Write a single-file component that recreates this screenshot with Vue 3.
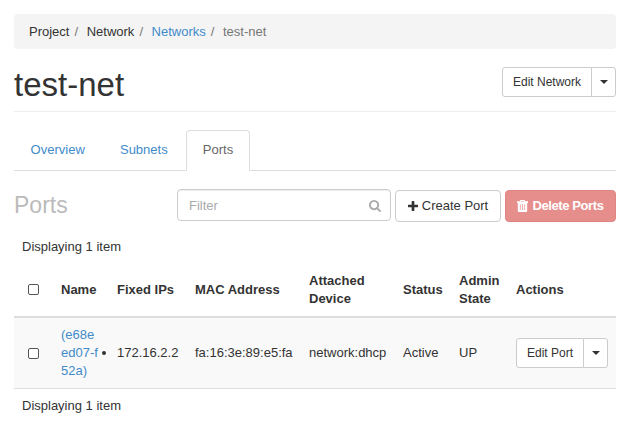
<script setup>
const crumbs = ['Project', 'Network', 'Networks', 'test-net']
const tabs = ['Overview', 'Subnets', 'Ports']
const columns = ['Name', 'Fixed IPs', 'MAC Address', 'Attached Device', 'Status', 'Admin State', 'Actions']
</script>

<template>
  <main class="page">
    <ol class="breadcrumb">
      <li v-for="(crumb, i) in crumbs" :key="crumb">
        <a v-if="i === 2" href="#">{{ crumb }}</a>
        <span v-else :class="{ current: i === 3 }">{{ crumb }}</span>
      </li>
    </ol>

    <header class="page-header">
      <h1>test-net</h1>
      <div class="btn-group">
        <button class="btn">Edit Network</button>
        <button class="btn toggle" aria-label="More actions"><span class="caret"></span></button>
      </div>
    </header>

    <nav class="tabs">
      <a v-for="tab in tabs" :key="tab" href="#" :class="{ active: tab === 'Ports' }">{{ tab }}</a>
    </nav>

    <div class="toolbar">
      <h3>Ports</h3>
      <div class="search">
        <input type="text" placeholder="Filter" />
        <svg class="search-icon" viewBox="0 0 1664 1664" aria-hidden="true">
          <path d="M1152 704q0-185-131.500-316.500t-316.500-131.500-316.500 131.500-131.500 316.500 131.500 316.500 316.500 131.500 316.500-131.500 131.500-316.500zm512 832q0 52-38 90t-90 38q-54 0-90-38l-343-342q-179 124-399 124-143 0-273.500-55.500t-225-150-150-225-55.500-273.500 55.500-273.500 150-225 225-150 273.500-55.500 273.500 55.500 225 150 150 225 55.500 273.500q0 220-124 399l343 343q37 37 37 90z" />
        </svg>
      </div>
      <button class="btn create">
        <svg class="plus-icon" viewBox="0 0 1408 1408" aria-hidden="true">
          <path d="M1408 608v192q0 40-28 68t-68 28h-416v416q0 40-28 68t-68 28h-192q-40 0-68-28t-28-68v-416h-416q-40 0-68-28t-28-68v-192q0-40 28-68t68-28h416v-416q0-40 28-68t68-28h192q40 0 68 28t28 68v416h416q40 0 68 28t28 68z" />
        </svg>
        Create Port
      </button>
      <button class="btn danger" disabled>
        <svg class="trash-icon" viewBox="0 0 11 12" aria-hidden="true">
          <path fill-rule="evenodd" d="M3.500 0h4l.8 1.300H11V3h-.8v7.700q0 1.300-1.200 1.300H2Q.8 12 .8 10.700V3H0V1.300h2.700zM4.200 1l-.2.500h3l-.2-.5zM2.900 4.200v5.800h.7V4.200zM5.150 4.200v5.800h.7V4.200zM7.400 4.200v5.800h.7V4.200z" />
        </svg>
        <span>Delete Ports</span>
      </button>
    </div>

    <div class="count">Displaying 1 item</div>
    <table>
      <colgroup>
        <col class="c-check" /><col class="c-name" /><col class="c-ip" /><col class="c-mac" />
        <col class="c-device" /><col class="c-status" /><col class="c-admin" /><col />
      </colgroup>
      <thead>
        <tr>
          <th class="check"><input type="checkbox" aria-label="Select all" /></th>
          <th v-for="column in columns" :key="column">{{ column }}</th>
        </tr>
      </thead>
      <tbody>
        <tr>
          <td class="check"><input type="checkbox" aria-label="Select port" /></td>
          <td><a href="#">(e68e<br />ed07-f<br />52a)</a></td>
          <td><ul><li>172.16.2.2</li></ul></td>
          <td>fa:16:3e:89:e5:fa</td>
          <td>network:dhcp</td>
          <td>Active</td>
          <td>UP</td>
          <td>
            <div class="btn-group">
              <button class="btn">Edit Port</button>
              <button class="btn toggle" aria-label="More actions"><span class="caret"></span></button>
            </div>
          </td>
        </tr>
      </tbody>
    </table>
    <div class="count footer">Displaying 1 item</div>
  </main>
</template>

<style>
body {
  background: #fff;
}
</style>

<style scoped>
* {
  box-sizing: border-box;
}
.page {
  padding: 14px 14px 0;
  font: 13px/18px "Liberation Sans", Arial, sans-serif;
  color: #333;
}
a {
  color: #428bca;
  text-decoration: none;
}
.breadcrumb {
  display: flex;
  height: 35px;
  margin: 0;
  padding: 9px 15px 8px;
  border-radius: 4px;
  background: #f4f4f4;
  list-style: none;
}
.breadcrumb li + li::before {
  content: "/";
  padding: 0 8.6px 0 5px;
  color: #777;
}
.current {
  color: #777;
}
.page-header {
  display: flex;
  justify-content: space-between;
  height: 63px;
  padding-top: 18px;
  border-bottom: 1px solid #eee;
}
h1 {
  margin: 0;
  font-size: 33px;
  font-weight: 400;
  line-height: 36px;
}
.btn-group {
  display: flex;
  width: max-content;
  height: 30px;
}
.btn {
  display: flex;
  align-items: center;
  justify-content: center;
  margin: 0;
  padding: 0 10px;
  border: 1px solid #ccc;
  border-radius: 4px;
  background: #fff;
  color: #333;
  font: inherit;
  white-space: nowrap;
}
.btn-group .btn {
  font-size: 12px;
}
.btn-group .btn:first-child {
  border-radius: 3px 0 0 3px;
}
.btn-group .toggle {
  width: 25px;
  margin-left: -1px;
  padding: 0;
  border-radius: 0 3px 3px 0;
}
.caret {
  border-top: 4px solid #333;
  border-right: 4px solid transparent;
  border-left: 4px solid transparent;
}
.tabs {
  display: flex;
  gap: 2px;
  height: 41px;
  margin-top: 18px;
  border-bottom: 1px solid #ddd;
}
.tabs a {
  height: 41px;
  padding: 10px 15.6px;
  border: 1px solid transparent;
  line-height: 18px;
}
.tabs .active {
  border-color: #ddd #ddd #fff;
  border-radius: 4px 4px 0 0;
  background: #fff;
  color: #666;
}
.toolbar {
  display: grid;
  grid-template-columns: 159px 214px 106px 111px;
  column-gap: 4px;
  height: 33px;
  margin-top: 18px;
}
h3 {
  margin: 3px 0 0;
  color: #bbb;
  font-size: 23px;
  font-weight: 400;
  line-height: 26px;
}
.search {
  display: flex;
  align-items: center;
  justify-content: space-between;
  height: 32px;
  padding: 1px 9px 0 11px;
  border: 1px solid #ccc;
  border-radius: 4px;
  box-shadow: inset 0 1px 1px rgba(0, 0, 0, 0.075);
}
.search input {
  width: 150px;
  padding: 0;
  border: 0;
  outline: 0;
  background: none;
  font: inherit;
}
.search input::placeholder {
  color: #aaa;
  opacity: 1;
}
svg {
  flex: none;
  fill: currentColor;
}
.search-icon {
  width: 12px;
  height: 12px;
  color: #aaa;
}
.toolbar .btn {
  height: 32px;
  margin-top: 1px;
  gap: 4px;
}
.plus-icon {
  width: 10px;
  height: 10px;
}
.trash-icon {
  width: 11px;
  height: 12px;
}
.toolbar .danger {
  border-color: #e08583;
  background: #e68e8c;
  color: #fff;
  font-weight: 700;
}
.danger span {
  letter-spacing: -0.4px;
}
.count {
  padding: 16px 8px 6px;
}
table {
  width: 100%;
  border-collapse: separate;
  border-spacing: 0;
  table-layout: fixed;
}
.c-check { width: 39px; }
.c-name { width: 56px; }
.c-ip { width: 78px; }
.c-mac { width: 114px; }
.c-device { width: 94px; }
.c-status { width: 56px; }
.c-admin { width: 57px; }
th,
td {
  padding: 0 0 0 8px;
  text-align: left;
  vertical-align: middle;
  white-space: nowrap;
}
th {
  height: 56px;
  padding-top: 1px;
  border-bottom: 2px solid #ddd;
  white-space: normal;
}
td {
  height: 71px;
  border-bottom: 1px solid #ddd;
  background: #f9f9f9;
}
.check {
  padding-left: 14px;
}
.check input {
  display: block;
  width: 11px;
  height: 11px;
  margin: 0;
  border: 1px solid #555;
  border-radius: 2px;
  background: #fff;
  appearance: none;
}
ul {
  margin: 0;
  padding: 0;
}
.footer {
  padding-top: 8px;
}
</style>
